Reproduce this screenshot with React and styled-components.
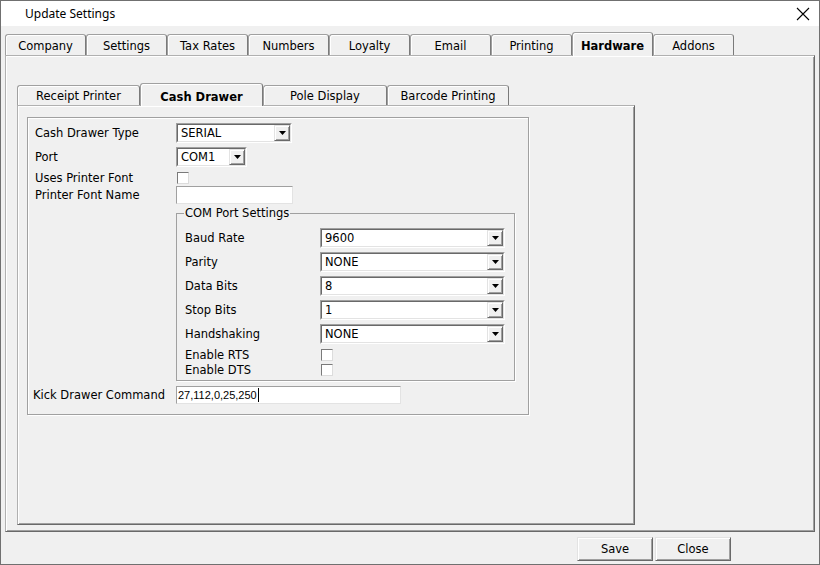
import React from "react";
import styled, { createGlobalStyle } from "styled-components";

const GlobalStyle = createGlobalStyle`
  html, body { margin: 0; padding: 0; background: #f0f0f0; }
  body { font-family: "DejaVu Sans", Tahoma, sans-serif; font-size: 11.5px; color: #000; }
  * { box-sizing: border-box; }
`;

const Window = styled.div`
  width: 820px;
  height: 565px;
  border: 1px solid #707070;
  background: #f0f0f0;
  display: flex;
  flex-direction: column;
  overflow: hidden;
`;

const TitleBar = styled.div`
  height: 25px;
  flex: none;
  background: #fff;
  display: flex;
  align-items: center;
  justify-content: space-between;
  padding: 0 9px 0 24px;
  font-family: "Noto Sans", "Open Sans", sans-serif;
  font-size: 12px;
`;

const Content = styled.div`
  flex: 1;
  display: flex;
  flex-direction: column;
  padding: 6px 4px 0 4px;
`;

const TabRow = styled.div`
  display: flex;
  align-items: flex-end;
  height: ${(p) => p.$h}px;
  position: relative;
  z-index: 1;
  flex: none;
`;

const Tab = styled.div`
  width: ${(p) => p.$w}px;
  height: ${(p) => (p.$active ? p.$h + 3 : p.$h)}px;
  margin-bottom: ${(p) => (p.$active ? -1 : 0)}px;
  flex: none;
  display: flex;
  align-items: center;
  justify-content: center;
  padding-top: ${(p) => (p.$active ? 3 : 1)}px;
  background: #f0f0f0;
  border: 1px solid;
  border-bottom: none;
  border-color: #a0a0a0 #7a7a7a transparent #a0a0a0;
  border-radius: 3px 3px 0 0;
  box-shadow: inset 1px 1px 0 #fff;
  font-weight: ${(p) => (p.$active ? "bold" : "normal")};
  white-space: nowrap;
`;

const Panel = styled.div`
  flex: none;
  width: ${(p) => p.$w}px;
  height: ${(p) => p.$h}px;
  background: #f0f0f0;
  border: 1px solid;
  border-color: #b0b0b0 #696969 #696969 #b0b0b0;
  box-shadow: inset 1px 1px 0 #fff, inset -1px -1px 0 #a0a0a0;
  padding: ${(p) => p.$pad};
  display: flex;
  flex-direction: column;
`;

const GroupBox = styled.div`
  width: 502px;
  height: 298px;
  border: 1px solid #a0a0a0;
  box-shadow: 1px 1px 0 #fff, inset 1px 1px 0 #fff;
  padding: 5px 0 0 7px;
  display: flex;
  flex-direction: column;
`;

const Row = styled.div`
  display: flex;
  align-items: center;
  height: ${(p) => p.$h}px;
  margin-top: ${(p) => p.$mt}px;
  margin-left: ${(p) => p.$ml || 0}px;
  flex: none;
`;

const Label = styled.div`
  width: ${(p) => p.$w}px;
  flex: none;
  white-space: nowrap;
`;

const SelectOuter = styled.div`
  width: ${(p) => p.$w}px;
  height: 20px;
  border: 1px solid;
  border-color: #a0a0a0 #fff #fff #a0a0a0;
  flex: none;
`;

const SelectInner = styled.div`
  height: 100%;
  display: flex;
  background: #fff;
  border: 1px solid;
  border-color: #696969 #e3e3e3 #e3e3e3 #696969;
`;

const SelectValue = styled.div`
  flex: 1;
  padding-left: 3px;
  display: flex;
  align-items: center;
  white-space: nowrap;
`;

const DropButton = styled.div`
  width: 16px;
  height: 100%;
  flex: none;
  background: #f0f0f0;
  border: 1px solid;
  border-color: #e3e3e3 #696969 #696969 #e3e3e3;
  box-shadow: inset 1px 1px 0 #fff, inset -1px -1px 0 #a0a0a0;
  display: flex;
  align-items: center;
  justify-content: center;
`;

const CheckBox = styled.div`
  width: 12px;
  height: 12px;
  flex: none;
  background: #fff;
  border: 1px solid;
  border-color: #7a7a7a #dcdcdc #dcdcdc #7a7a7a;
  margin-left: 1px;
`;

const TextInput = styled.div`
  width: ${(p) => p.$w}px;
  height: 18px;
  flex: none;
  background: #fff;
  border: 1px solid;
  border-color: #a0a0a0 #e3e3e3 #e3e3e3 #a0a0a0;
  display: flex;
  align-items: center;
  padding-left: 1px;
  font-family: "Liberation Sans", Arial, sans-serif;
  font-size: 11px;
`;

const Caret = styled.span`
  display: inline-block;
  width: 1px;
  height: 14px;
  background: #000;
  margin-left: 1px;
`;

const Fieldset = styled.fieldset`
  margin: 2px 0 0 141px;
  width: 339px;
  border: 1px solid #a0a0a0;
  box-shadow: 1px 1px 0 #fff;
  padding: 0 9px 4px 8px;
  min-width: 0;
  flex: none;
`;

const Legend = styled.legend`
  padding: 0 1px;
  margin-left: -1px;
  line-height: 14px;
  height: 14px;
`;

const Footer = styled.div`
  display: flex;
  justify-content: flex-end;
  gap: 2px;
  padding: 5px 84px 0 0;
`;

const Button = styled.div`
  width: 76px;
  height: 24px;
  display: flex;
  align-items: center;
  justify-content: center;
  background: #f0f0f0;
  border: 1px solid;
  border-color: #e3e3e3 #696969 #696969 #e3e3e3;
  box-shadow: inset 1px 1px 0 #fff, inset -1px -1px 0 #a0a0a0;
  font-size: 11.5px;
`;

const Arrow = () => (
  <svg width="7" height="4" viewBox="0 0 7 4">
    <polygon points="0,0 7,0 3.5,4" fill="#000" />
  </svg>
);

const Select = ({ w, value }) => (
  <SelectOuter $w={w}>
    <SelectInner>
      <SelectValue>{value}</SelectValue>
      <DropButton>
        <Arrow />
      </DropButton>
    </SelectInner>
  </SelectOuter>
);

const outerTabs = ["Company", "Settings", "Tax Rates", "Numbers", "Loyalty", "Email", "Printing", "Hardware", "Addons"];
const innerTabs = [
  ["Receipt Printer", 123],
  ["Cash Drawer", 123],
  ["Pole Display", 124],
  ["Barcode Printing", 122],
];

const comRows = [
  ["Baud Rate", "9600"],
  ["Parity", "NONE"],
  ["Data Bits", "8"],
  ["Stop Bits", "1"],
  ["Handshaking", "NONE"],
];

export default function App() {
  return (
    <>
      <GlobalStyle />
      <Window>
        <TitleBar>
          <span>Update Settings</span>
          <svg width="14" height="14" viewBox="0 0 14 14">
            <path d="M1 1 L13 13 M13 1 L1 13" stroke="#000" strokeWidth="1.1" />
          </svg>
        </TitleBar>
        <Content>
          <TabRow $h={23}>
            {outerTabs.map((t) => (
              <Tab key={t} $w={81} $h={21} $active={t === "Hardware"}>
                {t}
              </Tab>
            ))}
          </TabRow>
          <Panel $w={810} $h={477} $pad="27px 0 0 11px">
            <TabRow $h={22}>
              {innerTabs.map(([t, w]) => (
                <Tab key={t} $w={w} $h={20} $active={t === "Cash Drawer"}>
                  {t}
                </Tab>
              ))}
            </TabRow>
            <Panel $w={618} $h={420} $pad="11px 0 0 9px">
              <GroupBox>
                <Row $h={20} $mt={0}>
                  <Label $w={141}>Cash Drawer Type</Label>
                  <Select w={116} value="SERIAL" />
                </Row>
                <Row $h={20} $mt={4}>
                  <Label $w={141}>Port</Label>
                  <Select w={71} value="COM1" />
                </Row>
                <Row $h={13} $mt={4}>
                  <Label $w={141}>Uses Printer Font</Label>
                  <CheckBox />
                </Row>
                <Row $h={18} $mt={2}>
                  <Label $w={141}>Printer Font Name</Label>
                  <TextInput $w={117} />
                </Row>
                <Fieldset>
                  <Legend>COM Port Settings</Legend>
                  {comRows.map(([l, v], i) => (
                    <Row key={l} $h={20} $mt={i === 0 ? 8 : 4}>
                      <Label $w={135}>{l}</Label>
                      <Select w={185} value={v} />
                    </Row>
                  ))}
                  <Row $h={13} $mt={4}>
                    <Label $w={135}>Enable RTS</Label>
                    <CheckBox />
                  </Row>
                  <Row $h={13} $mt={2}>
                    <Label $w={135}>Enable DTS</Label>
                    <CheckBox />
                  </Row>
                </Fieldset>
                <Row $h={18} $mt={5} $ml={-2}>
                  <Label $w={143}>Kick Drawer Command</Label>
                  <TextInput $w={225}>
                    27,112,0,25,250
                    <Caret />
                  </TextInput>
                </Row>
              </GroupBox>
            </Panel>
          </Panel>
          <Footer>
            <Button>Save</Button>
            <Button>Close</Button>
          </Footer>
        </Content>
      </Window>
    </>
  );
}
